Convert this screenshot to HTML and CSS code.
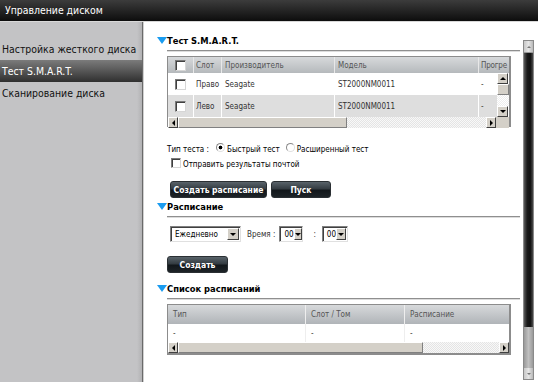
FILE: index.html
```html
<!DOCTYPE html>
<html lang="ru">
<head>
<meta charset="utf-8">
<link rel="stylesheet" href="styles.css">
</head>
<body>
<div class="topbar">Управление диском</div>
<div class="main">
  <nav class="sidebar">
    <div class="nav-item">Настройка жесткого диска</div>
    <div class="nav-item active">Тест S.M.A.R.T.</div>
    <div class="nav-item">Сканирование диска</div>
  </nav>
  <div class="content">
    <div class="panel">
      <div class="sec-head first"><span class="tri"></span>Тест S.M.A.R.T.</div>
      <div class="rule"></div>
      <div class="grid1">
        <div class="g1-body">
          <div class="g1-row head">
            <div class="c-chk"><span class="chk"></span></div>
            <div class="c-slot">Слот</div>
            <div class="c-man">Производитель</div>
            <div class="c-mod">Модель</div>
            <div class="c-prog">Прогре</div>
          </div>
          <div class="g1-row">
            <div class="c-chk"><span class="chk"></span></div>
            <div class="c-slot">Право</div>
            <div class="c-man">Seagate</div>
            <div class="c-mod">ST2000NM0011</div>
            <div class="c-prog">-</div>
          </div>
          <div class="g1-row alt">
            <div class="c-chk"><span class="chk"></span></div>
            <div class="c-slot">Лево</div>
            <div class="c-man">Seagate</div>
            <div class="c-mod">ST2000NM0011</div>
            <div class="c-prog">-</div>
          </div>
          <div class="vsb-small">
            <span class="sb-btn"><span class="ar-up"></span></span>
            <span class="sb-thumb-v"></span>
            <span class="sb-track-v"></span>
            <span class="sb-btn"><span class="ar-down"></span></span>
          </div>
        </div>
        <div class="hsb">
          <span class="sb-btn"><span class="ar-left"></span></span>
          <span class="hsb-thumb" style="width:169px"></span>
          <span class="hsb-track"></span>
          <span class="sb-btn"><span class="ar-right"></span></span>
          <span class="hsb-corner"></span>
        </div>
      </div>

      <div class="opt-row">
        <span class="lbl">Тип теста :</span>
        <span class="radio on"></span><span class="opt">Быстрый тест</span>
        <span class="radio"></span><span class="opt">Расширенный тест</span>
      </div>
      <div class="mail-row"><span class="chk sm"></span><span class="opt">Отправить результаты почтой</span></div>
      <div class="btn-row">
        <span class="btn w97">Создать расписание</span>
        <span class="btn w60">Пуск</span>
      </div>

      <div class="sec-head tight"><span class="tri"></span>Расписание</div>
      <div class="rule"></div>
      <div class="sel-row">
        <span class="select w71"><span class="sel-val">Ежедневно</span><span class="sel-btn"><span class="ar-down"></span></span></span>
        <span class="lbl t-time">Время :</span>
        <span class="select w24"><span class="sel-val">00</span><span class="sel-btn"><span class="ar-down"></span></span></span>
        <span class="lbl t-colon">:</span>
        <span class="select w26"><span class="sel-val">00</span><span class="sel-btn"><span class="ar-down"></span></span></span>
      </div>
      <div class="btn-row2"><span class="btn w61">Создать</span></div>

      <div class="sec-head third"><span class="tri"></span>Список расписаний</div>
      <div class="rule"></div>
      <div class="grid2">
        <div class="g2-row head">
          <div class="c2-a">Тип</div>
          <div class="c2-b">Слот / Том</div>
          <div class="c2-c">Расписание</div>
        </div>
        <div class="g2-row">
          <div class="c2-a">-</div>
          <div class="c2-b">-</div>
          <div class="c2-c">-</div>
        </div>
        <div class="hsb">
          <span class="sb-btn"><span class="ar-left"></span></span>
          <span class="hsb-thumb" style="width:245px"></span>
          <span class="hsb-track"></span>
          <span class="sb-btn"><span class="ar-right"></span></span>
        </div>
      </div>
    </div>
    <div class="vsb-main">
      <span class="vm-btn"><span class="ar-up light"></span></span>
      <span class="vm-thumb"></span>
      <span class="vm-track"></span>
      <span class="vm-btn"><span class="ar-down light"></span></span>
    </div>
  </div>
</div>
</body>
</html>
```
FILE: styles.css
```css
* { box-sizing: border-box; }
html, body { margin: 0; padding: 0; }
body {
  width: 538px;
  height: 382px;
  overflow: hidden;
  background: #fff;
  font-family: "DejaVu Sans Condensed", "DejaVu Sans", sans-serif;
  font-size: 8px;
  color: #000;
}
.topbar {
  height: 22px;
  line-height: 20px;
  padding-left: 5px;
  color: #fff;
  font-size: 10.4px;
  background: linear-gradient(#3c3c3c, #0d0d0d);
  border-bottom: 1px solid #d8d8d8;
}
.main {
  display: flex;
  height: 360px;
}
.sidebar {
  width: 144px;
  flex: none;
  background: linear-gradient(to right, #c3c3c5 0, #c3c3c5 137px, #b2b2b4 142px, #6a6a6a 142px, #6a6a6a 143px, #d0d0d0 143px);
  padding-top: 16px;
}
.nav-item {
  height: 22px;
  line-height: 22px;
  padding-left: 2px;
  font-size: 10.4px;
  color: #111;
  white-space: nowrap;
}
.nav-item.active {
  width: 142px;
  color: #fff;
  background: linear-gradient(#7b7b7b, #565656 50%, #2f2f2f);
}
.content {
  flex: 1;
  display: flex;
}
.panel {
  flex: 1;
  padding-left: 13px;
}
.sec-head {
  display: flex;
  align-items: center;
  height: 12px;
  margin-top: 6px;
  font-weight: bold;
  font-size: 9.3px;
}
.sec-head.first { margin-top: 12px; }
.sec-head.tight { margin-top: 2px; }
.sec-head.third { margin-top: 9px; }
.tri {
  width: 0; height: 0;
  border-left: 5px solid transparent;
  border-right: 5px solid transparent;
  border-top: 7px solid #1a9cf0;
  margin-right: 0;
}
.rule {
  margin: 4px 0 0 10px;
  width: 353px;
  height: 2px;
  background: linear-gradient(#8f8f8f 50%, #dcdcdc 50%);
}
.grid1 {
  margin: 4px 0 0 10px;
  width: 344px;
  height: 71px;
  border: 1px solid #8c8c8c;
  border-width: 1px 2px 2px 1px;
  font-size: 8px;
  color: #333;
  background: #fff;
}
.g1-body { position: relative; }
.g1-row {
  display: flex;
  height: 22px;
  align-items: center;
  white-space: nowrap;
  overflow: hidden;
}
.g1-row.head {
  height: 16px;
  color: #555;
  background: linear-gradient(#d7d9db, #b5b9bc);
}
.g1-row.alt { background: #dedede; }
.g1-row > div {
  height: 100%;
  display: flex;
  align-items: center;
  padding-left: 3px;
  border-right: 1px solid #fff;
  flex: none;
  overflow: hidden;
}
.g1-row.head > div { border-right: 1px solid #e8e8e8; }
.c-chk { width: 26px; justify-content: center; padding-left: 0 !important; }
.c-slot { width: 28px; padding-left: 2px !important; }
.c-man { width: 113px; }
.c-mod { width: 144px; }
.c-prog { width: 30px; padding-left: 2px !important; border-right: 0 !important; letter-spacing: -0.2px; }
.chk {
  display: inline-block;
  width: 11px; height: 11px;
  border: 1px solid #7a7a7a;
  border-right-color: #d6d6d6;
  border-bottom-color: #d6d6d6;
  background: #fff;
  box-shadow: inset 1px 1px 0 #404040;
}
.vsb-small {
  position: absolute;
  right: 0;
  top: 16px;
  width: 12px;
  height: 44px;
  display: flex;
  flex-direction: column;
  background: #fff;
}
.sb-btn {
  display: flex;
  align-items: center;
  justify-content: center;
  flex: none;
  width: 11px;
  height: 11px;
  background: #d4d0c8;
  border: 1px solid;
  border-color: #fff #404040 #404040 #fff;
}
.sb-thumb-v {
  height: 11px;
  background: #d4d0c8;
  border: 1px solid;
  border-color: #fff #808080 #808080 #fff;
}
.sb-track-v { flex: 1; background: repeating-conic-gradient(#eeeeee 0 25%, #fff 0 50%) 0 0 / 2px 2px; }
.ar-up, .ar-down, .ar-left, .ar-right { width: 0; height: 0; }
.ar-up { border-left: 3px solid transparent; border-right: 3px solid transparent; border-bottom: 3px solid #000; }
.ar-down { border-left: 3px solid transparent; border-right: 3px solid transparent; border-top: 3px solid #000; }
.ar-left { border-top: 3px solid transparent; border-bottom: 3px solid transparent; border-right: 3px solid #000; }
.ar-right { border-top: 3px solid transparent; border-bottom: 3px solid transparent; border-left: 3px solid #000; }
.ar-up.light { border-bottom-color: #777; border-width: 0 2px 2px; }
.ar-down.light { border-top-color: #777; border-width: 2px 2px 0; }
.hsb {
  display: flex;
  height: 11px;
  background: #fff;
}
.hsb .sb-btn { width: 10px; height: 11px; }
.hsb-thumb {
  flex: none;
  background: #d4d0c8;
  border: 1px solid;
  border-color: #fff #808080 #808080 #fff;
}
.hsb-track { flex: 1; background: repeating-conic-gradient(#e4e4e4 0 25%, #f8f8f8 0 50%) 0 0 / 2px 2px; }
.hsb-corner { width: 13px; flex: none; background: #d4d0c8; }

.opt-row {
  display: flex;
  align-items: center;
  margin: 16px 0 0 10px;
  height: 12px;
  font-size: 8px;
  white-space: nowrap;
}
.opt-row .lbl { margin-right: 7px; }
.radio {
  display: inline-block;
  width: 9px; height: 9px;
  border-radius: 50%;
  border: 1px solid #8a8a8a;
  border-right-color: #e0e0e0;
  border-bottom-color: #e0e0e0;
  background: #fff;
  margin-right: 2px;
  position: relative;
  top: -2px;
}
.radio.on { background: radial-gradient(circle, #000 0 1.6px, #fff 2.2px); }
.opt { margin-right: 6px; }
.mail-row {
  display: flex;
  align-items: center;
  margin: 3px 0 0 14px;
  height: 12px;
  font-size: 8px;
}
.chk.sm { width: 10px; height: 10px; margin-right: 2px; position: relative; top: -1px; }
.btn-row {
  display: flex;
  gap: 4px;
  margin: 11px 0 0 13px;
}
.btn {
  display: inline-flex;
  align-items: center;
  justify-content: center;
  height: 17px;
  border-radius: 3px;
  border: 1px solid #2a2f33;
  background: linear-gradient(#59636a, #343c42 45%, #12171b 55%, #1d2327);
  color: #fff;
  font-weight: bold;
  font-size: 8.5px;
  white-space: nowrap;
}
.w97 { width: 97px; }
.w60 { width: 60px; }
.w61 { width: 61px; }
.sel-row {
  display: flex;
  align-items: center;
  margin: 8px 0 0 13px;
  height: 16px;
  font-size: 8px;
}
.select {
  display: flex;
  height: 16px;
  border: 1px solid;
  border-color: #808080 #e0e0e0 #e0e0e0 #808080;
  box-shadow: inset 1px 1px 0 #404040;
  background: #fff;
  padding: 1px;
}
.sel-val { flex: 1; padding-left: 3px; line-height: 13px; }
.sel-btn {
  width: 12px;
  display: flex;
  align-items: center;
  justify-content: center;
  background: #d4d0c8;
  border: 1px solid;
  border-color: #fff #404040 #404040 #fff;
}
.w71 { width: 71px; }
.w24 { width: 24px; }
.w26 { width: 26px; }
.t-time { margin: 0 4px 0 6px; color: #333; }
.t-colon { margin: 0 6px 0 10px; color: #333; }
.btn-row2 { margin: 14px 0 0 10px; display: flex; }
.grid2 {
  margin: 4px 0 0 10px;
  width: 344px;
  border: 1px solid #8c8c8c;
  border-width: 1px 2px 2px 1px;
  font-size: 8px;
  color: #333;
}
.g2-row {
  display: flex;
  height: 18px;
  align-items: center;
}
.g2-row.head {
  height: 19px;
  color: #555;
  background: linear-gradient(#d7d9db, #b0b4b8);
}
.g2-row > div {
  height: 100%;
  display: flex;
  align-items: center;
  padding-left: 5px;
  border-right: 1px solid #eee;
  flex: none;
}
.c2-a { width: 138px; }
.c2-b { width: 99px; }
.c2-c { width: 104px; border-right: 0 !important; }
.vsb-main {
  flex: none;
  width: 11px;
  margin: 18px 4px 2px 0;
  display: flex;
  flex-direction: column;
  border: 1px solid #8a8a8a;
  background: #a9a9a9;
}
.vm-btn {
  height: 11px;
  display: flex;
  align-items: center;
  justify-content: center;
  background: linear-gradient(to right, #c8c8c8, #e6e6e6, #b8b8b8);
  flex: none;
}
.vm-thumb {
  height: 275px;
  flex: none;
  background: linear-gradient(to right, #5a5a5a, #1b1b1b 35%, #111 70%, #4a4a4a);
  border-top: 1px solid #999;
}
.vm-track { flex: 1; background: linear-gradient(to right, #9a9a9a, #c0c0c0, #9a9a9a); }
```
